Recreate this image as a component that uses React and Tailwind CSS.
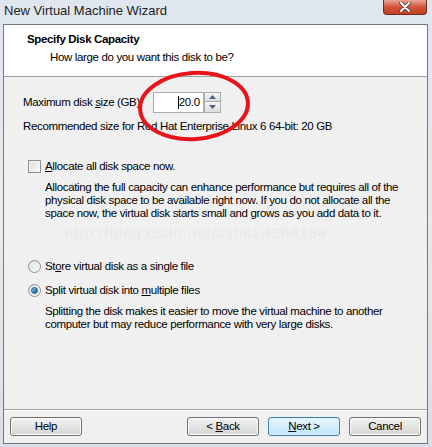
import React from 'react';

const font = { fontFamily: '"Segoe UI", "Liberation Sans", Arial, sans-serif' };

const WinButton = ({ children, primary, className = '' }) => (
    <div
        className={
            'w-[72px] h-[19px] rounded-[3px] border flex items-center justify-center text-black ' +
            (primary
                ? 'border-[#3c7fb1] bg-gradient-to-b from-[#eaf6fd] to-[#bee6fd] shadow-[inset_0_0_0_1px_#dff2fc] '
                : 'border-[#707070] bg-gradient-to-b from-[#f2f2f2] to-[#d5d5d5] shadow-[inset_0_0_0_1px_#fbfbfb] ') +
            className
        }
    >
        {children}
    </div>
);

const Radio = ({ checked }) => (
    <span className="w-[13px] h-[13px] rounded-full border border-[#8e8f8f] bg-gradient-to-br from-[#e0e0e0] to-[#fafafa] flex items-center justify-center shrink-0">
        {checked && <span className="w-[7px] h-[7px] rounded-full bg-gradient-to-br from-[#7fd0f5] to-[#0d4f8b] border border-[#1b5e91]" />}
    </span>
);

const App = () => {
    return (
        <div className="w-[432px] h-[447px] relative overflow-hidden flex flex-col bg-gradient-to-b from-[#dfe6ee] via-[#e6ebf0] to-[#d8dfe6]" style={font}>
            {/* title bar */}
            <div className="h-[24px] flex justify-between items-start shrink-0">
                <span className="pl-[4px] pt-[2px] text-[13px] text-[#1e1e1e] leading-[18px]">New Virtual Machine Wizard</span>
                <div className="mr-[5px] w-[44px] h-[15px] rounded-b-[4px] border border-t-0 border-[#6e2b22] bg-gradient-to-b from-[#e8a493] via-[#d2533a] to-[#c4401f] flex items-center justify-center">
                    <svg width="12" height="10" viewBox="0 0 12 10">
                        <path d="M2 1 L10 9 M10 1 L2 9" stroke="#3a3a3a" strokeWidth="3.4" strokeLinecap="round" />
                        <path d="M2 1 L10 9 M10 1 L2 9" stroke="#ffffff" strokeWidth="2" strokeLinecap="round" />
                    </svg>
                </div>
            </div>

            {/* client area */}
            <div className="ml-[3px] mr-[4px] mb-[3px] flex-1 flex flex-col border border-[#6f7882] bg-[#f0f0f0] text-[11.5px] tracking-[-0.35px] text-black">
                <div className="h-[52px] bg-white border-b border-[#a0a0a0] pl-[23px] pt-[6px] shrink-0">
                    <div className="font-bold leading-[16px]">Specify Disk Capacity</div>
                    <div className="pl-[23px] pt-[2px] leading-[16px]">How large do you want this disk to be?</div>
                </div>

                <div className="flex-1 pl-[19px] pt-[15px] flex flex-col">
                    <div className="flex items-center h-[21px]">
                        <span>Maximum disk <u>s</u>ize (GB):</span>
                        <div className="ml-[10px] flex">
                            <div className="w-[51px] h-[21px] border border-[#abadb3] bg-white flex items-center justify-end pr-[3px]">
                                <span className="w-[1px] h-[13px] bg-black" />
                                <span>20.0</span>
                            </div>
                            <div className="w-[17px] h-[21px] flex flex-col">
                                <div className="h-[10px] border border-[#acacac] bg-gradient-to-b from-[#f6f6f6] to-[#dcdcdc] flex items-center justify-center">
                                    <svg width="7" height="4" viewBox="0 0 7 4"><path d="M0 4 L3.5 0 L7 4 Z" fill="#4d6185" /></svg>
                                </div>
                                <div className="h-[11px] border border-t-0 border-[#acacac] bg-gradient-to-b from-[#f6f6f6] to-[#dcdcdc] flex items-center justify-center">
                                    <svg width="7" height="4" viewBox="0 0 7 4"><path d="M0 0 L7 0 L3.5 4 Z" fill="#4d6185" /></svg>
                                </div>
                            </div>
                        </div>
                    </div>
                    <div className="pt-[5px] leading-[16px]">Recommended size for Red Hat Enterprise Linux 6 64-bit: 20 GB</div>

                    <div className="mt-[24px] flex items-center gap-[4px] pl-[5px] leading-[16px]">
                        <span className="w-[13px] h-[13px] border border-[#8e8f8f] bg-gradient-to-br from-[#dcdcdc] to-[#fbfbfb] shadow-[inset_0_0_0_1px_#f4f4f4] shrink-0" />
                        <span><u>A</u>llocate all disk space now.</span>
                    </div>
                    <div className="pl-[22px] pt-[7px] leading-[13px] whitespace-nowrap">
                        Allocating the full capacity can enhance performance but requires all of the
                        <br />
                        physical disk space to be available right now. If you do not allocate all the
                        <br />
                        space now, the virtual disk starts small and grows as you add data to it.
                    </div>

                    <div className="pl-[42px] pt-[5px] leading-[16px] text-[15px] text-[#e8e8e8] tracking-[1px]">
                        http://blog.csdn.net/csh624366188
                    </div>

                    <div className="mt-[17px] flex items-center gap-[4px] pl-[5px] leading-[16px]">
                        <Radio />
                        <span>St<u>o</u>re virtual disk as a single file</span>
                    </div>
                    <div className="mt-[8px] flex items-center gap-[4px] pl-[5px] leading-[16px]">
                        <Radio checked />
                        <span>Split virtual disk into <u>m</u>ultiple files</span>
                    </div>
                    <div className="pl-[22px] pt-[7px] leading-[13px] whitespace-nowrap">
                        Splitting the disk makes it easier to move the virtual machine to another
                        <br />
                        computer but may reduce performance with very large disks.
                    </div>
                </div>

                <div className="h-[34px] border-t border-[#a0a0a0] shadow-[inset_0_1px_0_#ffffff] flex items-center px-[6px] shrink-0">
                    <WinButton>Help</WinButton>
                    <div className="flex-1" />
                    <WinButton><span>&lt; <u>B</u>ack</span></WinButton>
                    <WinButton primary className="ml-[9px]"><span><u>N</u>ext &gt;</span></WinButton>
                    <WinButton className="ml-[9px]">Cancel</WinButton>
                </div>
            </div>

            {/* red annotation ellipse */}
            <svg className="absolute left-[136px] top-[69px]" width="118" height="76" viewBox="0 0 118 76">
                <ellipse cx="58" cy="37" rx="54" ry="33" fill="none" stroke="#e8141b" strokeWidth="4" transform="rotate(-4 58 37)" />
            </svg>
        </div>
    );
};

export default App;
